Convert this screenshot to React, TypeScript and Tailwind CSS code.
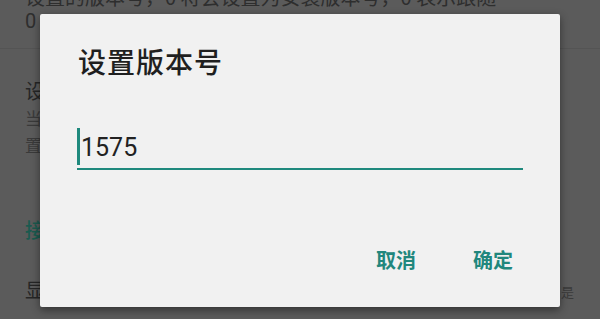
import React from 'react';

const cjk = { fontFamily: '"Noto Sans CJK SC", "Noto Sans", sans-serif' };

const VersionDialog = () => {
  return (
    <div
      className="absolute left-[40px] top-[14px] w-[520px] h-[293px] bg-[#f1f1f1] rounded-[2px] shadow-[0_3px_8px_rgba(0,0,0,0.45)] flex flex-col pt-[30px] px-[37px]"
      style={cjk}
    >
      <h2 className="text-[28px] leading-[34px] font-medium text-[#1f1f1f] tracking-[1px] pl-[1px]">设置版本号</h2>

      <div className="mt-[50px] h-[42px] flex items-center border-b-2 border-[#1f897d]">
        <span className="self-start w-[3px] h-[37px] bg-[#1f897d]" />
        <span
          className="ml-[1px] text-[25px] leading-[30px] text-[#222222]"
          style={{ fontFamily: 'Roboto, "Noto Sans", sans-serif' }}
        >
          1575
        </span>
      </div>

      <div className="mt-[76px] flex justify-end gap-[57px] pr-[10px]">
        <button className="text-[20px] leading-[28px] font-semibold text-[#21877d]">取消</button>
        <button className="text-[20px] leading-[28px] font-semibold text-[#21877d]">确定</button>
      </div>
    </div>
  );
};

const App = () => {
  return (
    <div className="relative w-[600px] h-[319px] overflow-hidden bg-[#5b5b5b]" style={cjk}>
      {/* settings page dimmed behind the dialog */}
      <div className="flex flex-col pl-[25px] mt-[-15px] text-[#262626]">
        <div className="text-[20px] leading-[24px] whitespace-nowrap text-[#2e2e2e]">
          设置的版本号，0 将会设置为安装版本号，0 表示跟随
        </div>
        <div
          className="text-[20px] leading-[25px] text-[#2e2e2e]"
          style={{ fontFamily: 'Roboto, "Noto Sans", sans-serif' }}
        >
          0
        </div>
        <div className="h-px bg-[#545454] mt-[14px] -ml-[25px]" />

        <div className="mt-[29px] text-[20px] leading-[26px] whitespace-nowrap">设置版本号</div>
        <div className="text-[17px] leading-[27px] whitespace-nowrap text-[#3a3a3a]">当前版本号会被替换为设置的版本号</div>
        <div className="text-[17px] leading-[27px] whitespace-nowrap text-[#3a3a3a]">置空则使用默认</div>

        <div className="mt-[59px] text-[20px] leading-[26px] whitespace-nowrap text-[#1b5a4f] font-medium">接口设置</div>

        <div className="mt-[34px] text-[20px] leading-[26px] whitespace-nowrap">显示隐藏设置</div>
      </div>

      <div className="absolute right-[26px] top-[284px] text-[13px] leading-[16px] text-[#3a3a3a]">是</div>

      <VersionDialog />
    </div>
  );
};

export default App;
